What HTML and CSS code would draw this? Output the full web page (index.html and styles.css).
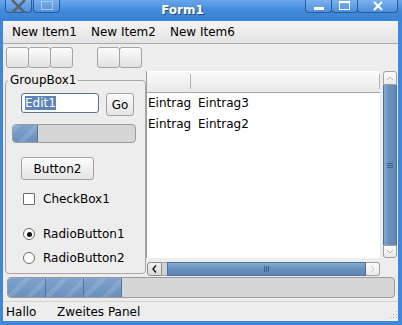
FILE: index.html
```html
<!DOCTYPE html>
<html>
<head>
<meta charset="UTF-8">
<title>Form1</title>
<link rel="stylesheet" href="styles.css">
</head>
<body>
<div class="window">
  <div class="titlebar">
    <div class="tb-left">
      <div class="tbtn tb-menu">
        <svg width="20" height="13" viewBox="0 0 20 13"><path d="M3 0 L16 13 M16 0 L3 13" stroke="#5a6572" stroke-width="2.6" fill="none"/></svg>
      </div>
      <div class="tbtn tb-shade">
        <svg width="12" height="10" viewBox="0 0 12 10"><rect x="0.5" y="0.5" width="11" height="8" fill="none" stroke="#a9c9ee" stroke-width="1"/></svg>
      </div>
    </div>
    <div class="title">Form1</div>
    <div class="tb-right">
      <div class="tbtn tb-min">
        <svg width="10" height="10" viewBox="0 0 10 10"><rect x="0" y="6" width="10" height="3" fill="#fff"/></svg>
      </div>
      <div class="tbtn tb-max">
        <svg width="11" height="10" viewBox="0 0 11 10"><rect x="0.5" y="0.5" width="10" height="8" fill="none" stroke="#fff" stroke-width="1"/><rect x="0" y="0" width="11" height="2" fill="#fff"/></svg>
      </div>
      <div class="tbtn tb-close">
        <svg width="12" height="10" viewBox="0 0 12 10"><path d="M2 1 L10 9 M10 1 L2 9" stroke="#fff" stroke-width="2.2" fill="none"/></svg>
      </div>
    </div>
  </div>

  <div class="client">
    <div class="menubar">
      <span class="menu-item">New Item1</span>
      <span class="menu-item">New Item2</span>
      <span class="menu-item">New Item6</span>
    </div>

    <div class="toolbar">
      <div class="tool-group">
        <button class="tool"></button><button class="tool"></button><button class="tool"></button>
      </div>
      <div class="tool-group">
        <button class="tool"></button><button class="tool"></button>
      </div>
    </div>

    <div class="main">
      <fieldset class="groupbox">
        <legend>GroupBox1</legend>
        <div class="edit-row">
          <div class="edit"><span class="sel">Edit1</span></div>
          <button class="btn btn-go">Go</button>
        </div>
        <div class="progress small"><div class="chunk c-small"></div></div>
        <button class="btn btn-2">Button2</button>
        <div class="check"><span class="box"></span>CheckBox1</div>
        <div class="radio first"><span class="dot on"></span>RadioButton1</div>
        <div class="radio"><span class="dot"></span>RadioButton2</div>
      </fieldset>

      <div class="listarea">
        <div class="listrow">
          <div class="tree">
            <div class="tree-head"><div class="col c1"></div><div class="col c2"></div></div>
            <div class="tree-row"><div class="col c1">Eintrag1</div><div class="col c2">Eintrag3</div></div>
            <div class="tree-row"><div class="col c1">Eintrag1</div><div class="col c2">Eintrag2</div></div>
          </div>
          <div class="vscroll">
            <div class="sb-btn v-up">
              <svg width="8" height="5" viewBox="0 0 8 5"><path d="M1 4 L4 1 L7 4" stroke="#b4b4b4" fill="none"/></svg>
            </div>
            <div class="v-slider">
              <svg width="6" height="7" viewBox="0 0 6 7"><path d="M0 1.5 H6 M0 3.5 H6 M0 5.5 H6" stroke="#3e5f86" stroke-width="1"/></svg>
            </div>
            <div class="sb-btn v-down">
              <svg width="8" height="5" viewBox="0 0 8 5"><path d="M1 1 L4 4 L7 1" stroke="#b4b4b4" fill="none"/></svg>
            </div>
          </div>
        </div>
        <div class="hscroll">
          <div class="sb-btn h-left">
            <svg width="5" height="8" viewBox="0 0 5 8"><path d="M4 0.5 L1 4 L4 7.5" stroke="#222" stroke-width="1.6" fill="none"/></svg>
          </div>
          <div class="h-track"></div>
          <div class="h-slider">
            <svg width="7" height="6" viewBox="0 0 7 6"><path d="M1.5 0 V6 M3.5 0 V6 M5.5 0 V6" stroke="#3e5f86" stroke-width="1"/></svg>
          </div>
          <div class="sb-btn h-right">
            <svg width="5" height="8" viewBox="0 0 5 8"><path d="M1 0.5 L4 4 L1 7.5" stroke="#c4c4c4" fill="none"/></svg>
          </div>
        </div>
      </div>
    </div>

    <div class="progress big">
      <div class="chunk"></div><div class="chunk"></div><div class="chunk"></div>
    </div>

    <div class="statusbar">
      <span class="panel p1">Hallo</span>
      <span class="panel">Zweites Panel</span>
      <svg class="grip" width="11" height="11" viewBox="0 0 11 11">
        <rect x="9" y="1" width="1" height="1" fill="#aaa"/>
        <rect x="6" y="4" width="1" height="1" fill="#aaa"/><rect x="9" y="4" width="1" height="1" fill="#aaa"/>
        <rect x="3" y="7" width="1" height="1" fill="#aaa"/><rect x="6" y="7" width="1" height="1" fill="#aaa"/><rect x="9" y="7" width="1" height="1" fill="#aaa"/>
      </svg>
    </div>
  </div>
</div>
</body>
</html>
```

FILE: styles.css
```css
* {
	box-sizing: border-box;
}

body {
	margin: 0;
	font-family: "DejaVu Sans", sans-serif;
	font-size: 12px;
	color: #000;
}

.window {
	width: 402px;
	height: 325px;
	display: flex;
	flex-direction: column;
	background: #3e87d9;
}

/* title bar */
.titlebar {
	height: 21px;
	flex-shrink: 0;
	display: flex;
	background: linear-gradient(#68a6ec, #3f88da 55%, #3a82d4);
}

.tb-left,
.tb-right {
	display: flex;
}

.tb-left {
	padding-left: 5px;
}

.tb-right {
	padding-right: 4px;
}

.tbtn {
	height: 13px;
	width: 27px;
	display: flex;
	align-items: center;
	justify-content: center;
	border: 1px solid #2a5c98;
	border-top: none;
	border-radius: 0 0 4px 4px;
	background: linear-gradient(#7cb1ee, #4d8fdc);
}

.tb-shade {
	margin-left: 1px;
}

.tb-max {
	margin-left: -1px;
}

.tb-close {
	width: 41px;
	margin-left: -1px;
}

.title {
	flex: 1;
	text-align: center;
	line-height: 20px;
	color: #fff;
	font-weight: bold;
	font-size: 12px;
	text-shadow: 1px 1px 1px rgba(0, 0, 0, 0.45);
}

/* client area */
.client {
	flex: 1;
	margin: 0 4px 4px 3px;
	display: flex;
	flex-direction: column;
	background: #ededed;
}

.menubar {
	height: 23px;
	flex-shrink: 0;
	display: flex;
	align-items: center;
	padding-left: 2px;
	border-bottom: 1px solid #a9a9a9;
	background: linear-gradient(#f4f4f4, #e3e3e3);
}

.menu-item {
	padding: 0 7px;
}

.toolbar {
	height: 27px;
	flex-shrink: 0;
	display: flex;
	gap: 24px;
	padding: 3px 0 0 3px;
}

.tool-group {
	display: flex;
}

.tool {
	width: 23px;
	height: 21px;
	padding: 0;
	margin: 0 0 0 -1px;
	border: 1px solid #a5a5a5;
	border-radius: 3px;
	background: linear-gradient(#fdfdfd, #e1e1e1);
}

.tool:first-child {
	margin-left: 0;
}

.main {
	height: 206px;
	flex-shrink: 0;
	display: flex;
}

/* group box */
.groupbox {
	width: 141px;
	min-width: 0;
	margin: 2px 0 3px 2px;
	padding: 0;
	border: 1px solid #a9a9a9;
	border-radius: 4px;
}

.groupbox legend {
	margin-left: 2px;
	padding: 0 2px;
	line-height: 14px;
}

.edit-row {
	display: flex;
	margin: 6px 0 0 15px;
}

.edit {
	width: 78px;
	height: 20px;
	padding: 2px 3px;
	line-height: 14px;
	border: 1px solid #5f738d;
	border-radius: 3px;
	background: #fff;
}

.sel {
	display: inline-block;
	background: #5c84ba;
	color: #fff;
}

.btn {
	padding: 0;
	font-family: inherit;
	font-size: 12px;
	color: #000;
	border: 1px solid #a3a3a3;
	border-radius: 3px;
	background: linear-gradient(#fcfcfc, #e4e4e4);
}

.btn-go {
	width: 28px;
	height: 23px;
	margin-left: 7px;
}

.btn-2 {
	display: block;
	width: 73px;
	height: 23px;
	margin: 14px 0 0 15px;
}

.check,
.radio {
	display: flex;
	align-items: center;
	gap: 8px;
	height: 14px;
	margin-left: 17px;
}

.check {
	margin-top: 12px;
}

.radio.first {
	margin-top: 21px;
}

.radio {
	margin-top: 10px;
}

.box {
	width: 12px;
	height: 12px;
	border: 1px solid #6b6b6b;
	border-radius: 1px;
	background: #fff;
}

.dot {
	width: 12px;
	height: 12px;
	border: 1px solid #6b6b6b;
	border-radius: 50%;
	background: #fff;
	display: flex;
	align-items: center;
	justify-content: center;
}

.dot.on::before {
	content: "";
	width: 5px;
	height: 5px;
	border-radius: 50%;
	background: #111;
}

/* progress bars */
.progress {
	display: flex;
	overflow: hidden;
	border: 1px solid #9b9b9b;
	border-radius: 4px;
	background: #d6d6d6;
}

.progress.small {
	width: 124px;
	height: 19px;
	margin: 8px 0 0 6px;
}

.progress.big {
	height: 21px;
	flex-shrink: 0;
	margin: 0 3px 0 4px;
}

.chunk {
	width: 38px;
	border-right: 1px solid #4f76a3;
	background:
		repeating-linear-gradient(-45deg, rgba(255, 255, 255, 0) 0 9px, rgba(255, 255, 255, 0.12) 9px 14px),
		linear-gradient(#7ea3cc, #6990be);
}

.c-small {
	width: 25px;
}

/* list view */
.listarea {
	width: 252px;
	display: flex;
	flex-direction: column;
}

.listrow {
	height: 187px;
	display: flex;
}

.tree {
	width: 234px;
	border-left: 1px solid #9c9c9c;
	background: #fff;
}

.col {
	height: 100%;
}

.tree-head {
	height: 22px;
	display: flex;
	border-bottom: 1px solid #a6a6a6;
	background: linear-gradient(#fcfcfc, #e8e8e8);
}

.tree-head .col {
	background: linear-gradient(#b4b4b4, #b4b4b4) right center / 1px 15px no-repeat;
}

.tree-head .c1 {
	width: 44px;
}

.tree-head .c2 {
	flex: 1;
}

.tree-row {
	height: 21px;
	display: flex;
	line-height: 21px;
}

.tree-row .c1 {
	width: 44px;
	padding-left: 1px;
	overflow: hidden;
	white-space: nowrap;
}

.tree-row .c2 {
	padding-left: 7px;
}

/* scroll bars */
.sb-btn {
	display: flex;
	align-items: center;
	justify-content: center;
	border: 1px solid #a2a2a2;
	background: linear-gradient(#fdfdfd, #e9e9e9);
}

.vscroll {
	width: 14px;
	margin-left: 3px;
	display: flex;
	flex-direction: column;
}

.v-up {
	height: 14px;
	border-radius: 3px 3px 0 0;
}

.v-down {
	height: 13px;
	border-radius: 0 0 3px 3px;
}

.v-slider {
	flex: 1;
	display: flex;
	align-items: center;
	justify-content: center;
	border: 1px solid #4b72a0;
	border-top: none;
	border-bottom: none;
	background: linear-gradient(90deg, #86a9cf, #6a91be 40%, #5f87b5);
}

.hscroll {
	width: 233px;
	height: 14px;
	margin: 4px 0 0 1px;
	display: flex;
}

.h-left {
	width: 15px;
	border-color: #8d8d8d;
	border-radius: 3px 0 0 3px;
	background: linear-gradient(#f2f2f2, #d9d9d9);
}

.h-track {
	width: 5px;
	border-top: 1px solid #a8a8a8;
	border-bottom: 1px solid #a8a8a8;
	background: #d2d2d2;
}

.h-slider {
	width: 199px;
	display: flex;
	align-items: center;
	justify-content: center;
	border: 1px solid #4b72a0;
	background: linear-gradient(#86a9cf, #6a91be 45%, #5f87b5);
}

.h-right {
	width: 14px;
	border-left: none;
	border-radius: 0 3px 3px 0;
}

/* status bar */
.statusbar {
	height: 20px;
	flex-shrink: 0;
	margin-top: 3px;
	display: flex;
	align-items: center;
	padding-left: 3px;
	border-top: 1px solid #d3d3d3;
}

.p1 {
	width: 51px;
}

.grip {
	margin-left: auto;
	align-self: flex-end;
}
```
